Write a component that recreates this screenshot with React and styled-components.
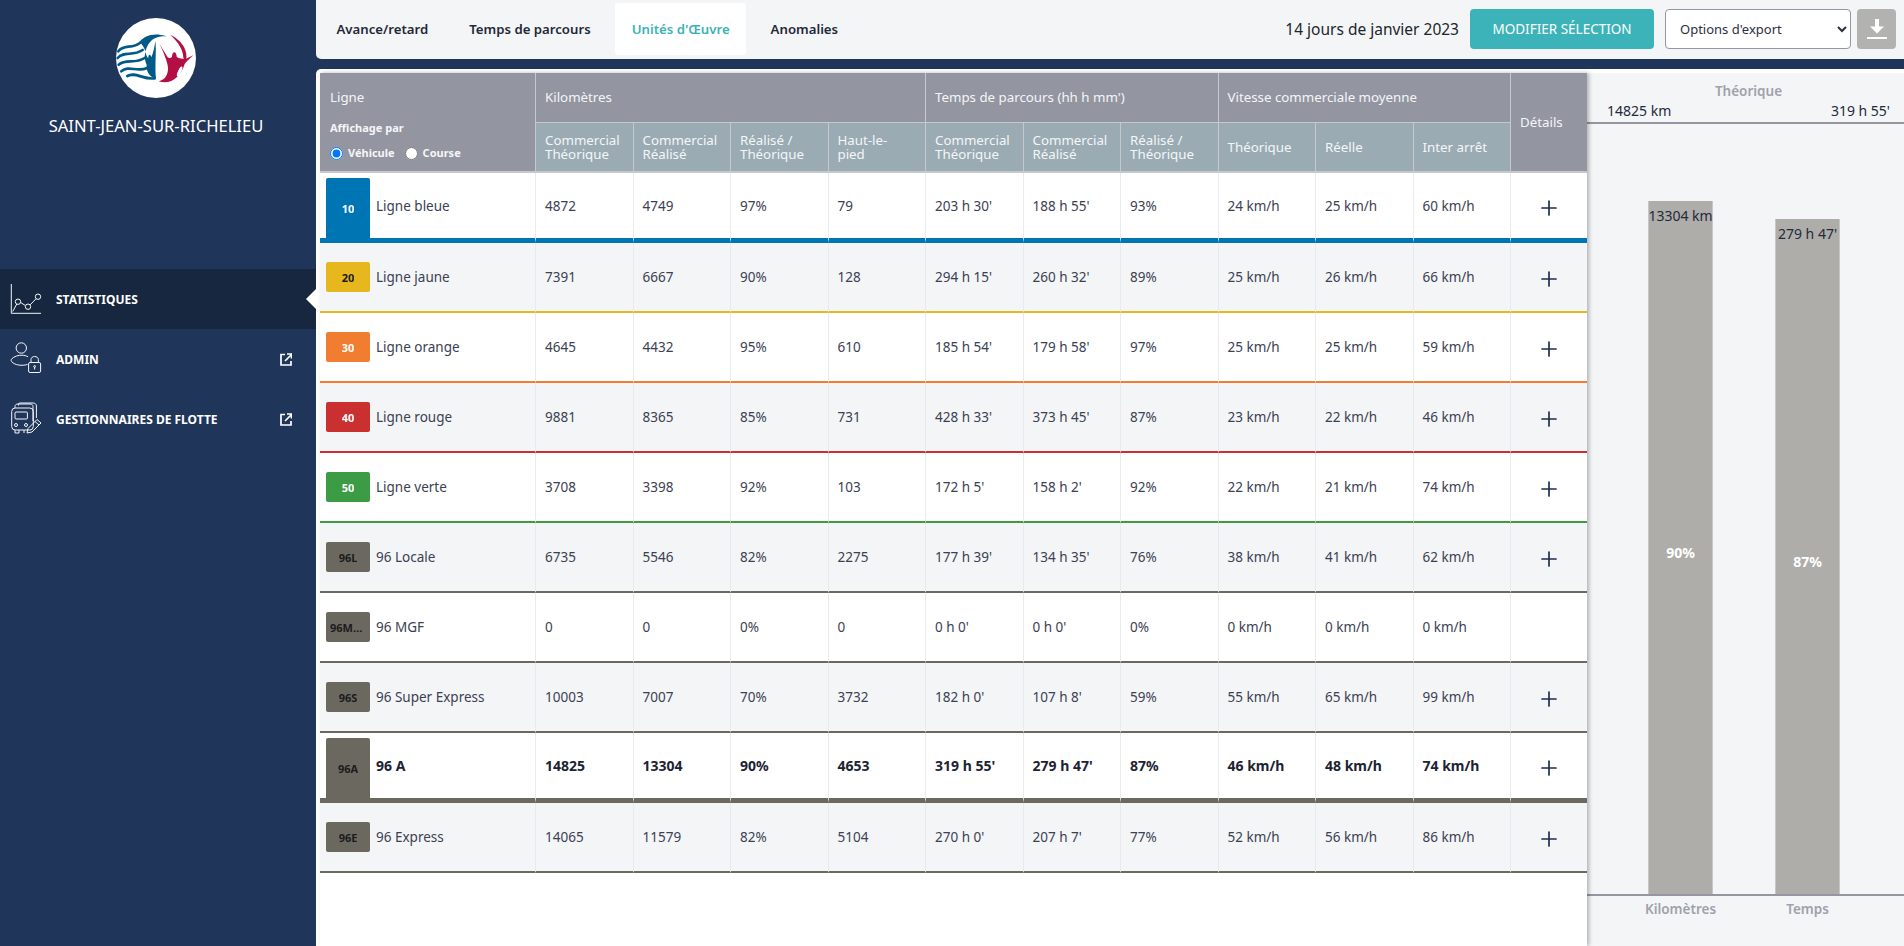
import React from "react";
import styled, { createGlobalStyle } from "styled-components";
import { Plus } from "lucide-react";

const GlobalStyle = createGlobalStyle`
  * { box-sizing: border-box; }
  html, body { margin: 0; height: 100%; }
  body {
    font-family: "Noto Sans", "Open Sans", sans-serif;
    font-size: 14px;
    color: #3b4152;
    background: #20355a;
    overflow: hidden;
  }
`;

const tabs = ["Avance/retard", "Temps de parcours", "Unités d'Œuvre", "Anomalies"];

const lines = [
  { code: "10", name: "Ligne bleue", color: "#0075b4", light: true, big: true, km: ["4872", "4749", "97%", "79"], time: ["203 h 30'", "188 h 55'", "93%"], speed: ["24 km/h", "25 km/h", "60 km/h"], plus: true },
  { code: "20", name: "Ligne jaune", color: "#e6b81e", km: ["7391", "6667", "90%", "128"], time: ["294 h 15'", "260 h 32'", "89%"], speed: ["25 km/h", "26 km/h", "66 km/h"], plus: true },
  { code: "30", name: "Ligne orange", color: "#f07d30", light: true, km: ["4645", "4432", "95%", "610"], time: ["185 h 54'", "179 h 58'", "97%"], speed: ["25 km/h", "25 km/h", "59 km/h"], plus: true },
  { code: "40", name: "Ligne rouge", color: "#c9302f", light: true, km: ["9881", "8365", "85%", "731"], time: ["428 h 33'", "373 h 45'", "87%"], speed: ["23 km/h", "22 km/h", "46 km/h"], plus: true },
  { code: "50", name: "Ligne verte", color: "#3b9c45", light: true, km: ["3708", "3398", "92%", "103"], time: ["172 h 5'", "158 h 2'", "92%"], speed: ["22 km/h", "21 km/h", "74 km/h"], plus: true },
  { code: "96L", name: "96 Locale", color: "#6b6860", km: ["6735", "5546", "82%", "2275"], time: ["177 h 39'", "134 h 35'", "76%"], speed: ["38 km/h", "41 km/h", "62 km/h"], plus: true },
  { code: "96MGF", name: "96 MGF", color: "#6b6860", km: ["0", "0", "0%", "0"], time: ["0 h 0'", "0 h 0'", "0%"], speed: ["0 km/h", "0 km/h", "0 km/h"] },
  { code: "96S", name: "96 Super Express", color: "#6b6860", km: ["10003", "7007", "70%", "3732"], time: ["182 h 0'", "107 h 8'", "59%"], speed: ["55 km/h", "65 km/h", "99 km/h"], plus: true },
  { code: "96A", name: "96 A", color: "#6b6860", big: true, strong: true, km: ["14825", "13304", "90%", "4653"], time: ["319 h 55'", "279 h 47'", "87%"], speed: ["46 km/h", "48 km/h", "74 km/h"], plus: true },
  { code: "96E", name: "96 Express", color: "#6b6860", km: ["14065", "11579", "82%", "5104"], time: ["270 h 0'", "207 h 7'", "77%"], speed: ["52 km/h", "56 km/h", "86 km/h"], plus: true },
];

function Logo() {
  return (
    <LogoSvg viewBox="30 30 240 240">
      <circle cx="150" cy="150" r="120" fill="#fff" />
      <g fill="none" stroke="#005a87" strokeWidth="8" strokeLinecap="round">
        <path d="M37 130 C52 108 78 124 103 104" />
        <path d="M35 150 C54 128 80 146 110 126" />
        <path d="M38 170 C60 150 86 170 116 150" />
        <path d="M46 190 C68 170 92 194 124 180" />
        <path d="M64 204 C88 190 112 216 146 211" />
      </g>
      <path fill="#005a87" d="M100 102 C115 82 145 72 182 85 C150 82 128 95 118 130 C115 118 108 108 100 102 Z" />
      <path fill="#005a87" d="M148 98 C152 130 146 170 150 213 C130 205 120 190 122 170 C118 160 114 150 118 132 C122 145 124 148 127 150 C126 138 134 136 136 148 C142 135 146 115 148 98 Z" />
      <path fill="#b40f45" d="M192 80 C225 95 248 125 240 160 L232 150 C232 125 215 100 192 80 Z" />
      <path fill="#b40f45" d="M160 107 L185 148 C190 152 196 150 198 146 C198 128 212 128 212 146 C218 152 228 152 240 152 L262 142 C252 152 244 158 236 168 C225 205 195 232 158 220 C178 215 186 200 186 180 C186 165 172 130 160 107 Z" />
      <ellipse cx="221" cy="190" rx="5" ry="16" transform="rotate(25 221 190)" fill="#fff" />
    </LogoSvg>
  );
}

function ChartIcon() {
  return (
    <NavSvg viewBox="0 0 32 34">
      <path d="M1.3 2 V31.3 H31" />
      <path d="M2.7 29.5 L6.8 22 M10.6 20.5 L15.2 23.4 M20.2 22.8 L26 16.8" />
      <circle cx="8" cy="19.7" r="2.7" />
      <circle cx="18" cy="24.7" r="2.7" />
      <circle cx="28" cy="14.7" r="2.7" />
    </NavSvg>
  );
}

function AdminIcon() {
  return (
    <NavSvg viewBox="0 0 32 34">
      <circle cx="11.3" cy="6" r="5.2" />
      <path d="M17.5 22.5 C12 24 5 23.5 1.5 19.5 C1 18.6 1 17.8 1.6 17 C4 14.3 9 13 12 13.2 C14.5 13.3 16.5 13.9 18 14.8" />
      <rect x="18.6" y="20.5" width="12" height="10" rx="1.5" />
      <path d="M21 20.5 V17.5 C21 13.5 28.3 13.5 28.3 17.5 V20.5" />
      <circle cx="24.6" cy="24.5" r="0.9" />
      <path d="M24.6 25 V27.5" />
    </NavSvg>
  );
}

function FleetIcon() {
  return (
    <NavSvg viewBox="0 0 32 34">
      <path d="M5 6 V4.5 C5 3 6 2 8 2 H20 C22 2 23 3 23 4.5 V19" />
      <path d="M8.5 3.5 V2 C8.5 1.2 9.5 1 11 1 H23 C25 1 26.4 2 26.4 4 V16" />
      <rect x="1.7" y="6" width="21.6" height="22" rx="3.5" />
      <rect x="5" y="10" width="12.4" height="7" rx="1" />
      <circle cx="6" cy="23" r="1.5" />
      <circle cx="16" cy="23" r="1.5" />
      <path d="M5 28 V31 H9 V28 M14 28 V31" />
      <path d="M17 31 L18 26.5 L27 17.5 L31 21 L22 30 Z M25 19.5 L29 23" />
    </NavSvg>
  );
}

function ExternalIcon() {
  return (
    <ExternalSvg viewBox="0 0 12 13">
      <path d="M5 1.5 H1 V12 H11 V8" />
      <path d="M5 8 L11 2 M7 1 H11.5 V5.5" />
    </ExternalSvg>
  );
}

function DownloadIcon() {
  return (
    <svg width="20" height="20" viewBox="0 0 20 20" fill="#fff">
      <path d="M8 0 H12 V7.5 H17 L10 14.5 L3 7.5 H8 Z" />
      <rect x="0" y="18" width="20" height="2" />
    </svg>
  );
}

function LineRow({ line, even }) {
  return (
    <Row $even={even} $strong={line.strong}>
      <BodyCell $color={line.color} $big={line.big} $first>
        <LineInfo $big={line.big}>
          <Badge $color={line.color} $light={line.light} $big={line.big}>
            <span>{line.code}</span>
          </Badge>
          <span>{line.name}</span>
        </LineInfo>
      </BodyCell>
      {[...line.km, ...line.time, ...line.speed].map((value, i) => (
        <BodyCell key={i} $color={line.color} $big={line.big}>
          {value}
        </BodyCell>
      ))}
      <BodyCell $color={line.color} $big={line.big} $center>
        {line.plus && (
          <PlusIcon>
            <Plus size={24} strokeWidth={1.7} />
          </PlusIcon>
        )}
      </BodyCell>
    </Row>
  );
}

function App() {
  return (
    <>
      <GlobalStyle />
      <Page>
        <Sidebar>
          <Brand>
            <Logo />
            <City>SAINT-JEAN-SUR-RICHELIEU</City>
          </Brand>
          <Nav>
            <NavItem $active>
              <ChartIcon />
              <NavLabel>STATISTIQUES</NavLabel>
            </NavItem>
            <NavItem>
              <AdminIcon />
              <NavLabel>ADMIN</NavLabel>
              <ExternalIcon />
            </NavItem>
            <NavItem>
              <FleetIcon />
              <NavLabel>GESTIONNAIRES DE FLOTTE</NavLabel>
              <ExternalIcon />
            </NavItem>
          </Nav>
        </Sidebar>

        <Content>
          <TopBar>
            <TabList>
              {tabs.map((tab) => (
                <Tab key={tab} $active={tab === "Unités d'Œuvre"}>
                  {tab}
                </Tab>
              ))}
            </TabList>
            <Tools>
              <Period>14 jours de janvier 2023</Period>
              <EditButton>MODIFIER SÉLECTION</EditButton>
              <ExportSelect defaultValue="options">
                <option value="options">Options d'export</option>
              </ExportSelect>
              <DownloadButton>
                <DownloadIcon />
              </DownloadButton>
            </Tools>
          </TopBar>

          <Main>
            <TableWrap>
              <Table>
                <colgroup>
                  <col style={{ width: 215 }} />
                  {Array.from({ length: 10 }, (_, i) => (
                    <col key={i} style={{ width: 97.5 }} />
                  ))}
                  <col style={{ width: 77 }} />
                </colgroup>
                <thead>
                  <tr>
                    <GroupHead rowSpan={2} $top>
                      Ligne
                      <DisplayTitle>Affichage par</DisplayTitle>
                      <RadioRow>
                        <RadioLabel>
                          <input type="radio" name="display" defaultChecked />
                          Véhicule
                        </RadioLabel>
                        <RadioLabel>
                          <input type="radio" name="display" />
                          Course
                        </RadioLabel>
                      </RadioRow>
                    </GroupHead>
                    <GroupHead colSpan={4}>Kilomètres</GroupHead>
                    <GroupHead colSpan={3}>Temps de parcours (hh h mm')</GroupHead>
                    <GroupHead colSpan={3}>Vitesse commerciale moyenne</GroupHead>
                    <GroupHead rowSpan={2} $tall>
                      Détails
                    </GroupHead>
                  </tr>
                  <tr>
                    <SubHead>Commercial<br />Théorique</SubHead>
                    <SubHead>Commercial<br />Réalisé</SubHead>
                    <SubHead>Réalisé /<br />Théorique</SubHead>
                    <SubHead>Haut-le-<br />pied</SubHead>
                    <SubHead>Commercial<br />Théorique</SubHead>
                    <SubHead>Commercial<br />Réalisé</SubHead>
                    <SubHead>Réalisé /<br />Théorique</SubHead>
                    <SubHead>Théorique</SubHead>
                    <SubHead>Réelle</SubHead>
                    <SubHead>Inter arrêt</SubHead>
                  </tr>
                </thead>
                <tbody>
                  {lines.map((line, i) => (
                    <LineRow key={line.code} line={line} even={i % 2 === 1} />
                  ))}
                </tbody>
              </Table>
            </TableWrap>

            <ChartPanel>
              <ChartHead>
                <ChartTitle>Théorique</ChartTitle>
                <ChartTotals>
                  <span>14825 km</span>
                  <span>319 h 55'</span>
                </ChartTotals>
              </ChartHead>
              <Plot>
                <Bar $ratio={0.9}>
                  <BarValue>13304 km</BarValue>
                  <BarPercent>90%</BarPercent>
                </Bar>
                <Bar $ratio={0.876}>
                  <BarValue>279 h 47'</BarValue>
                  <BarPercent>87%</BarPercent>
                </Bar>
              </Plot>
              <Axis>
                <AxisLabel>Kilomètres</AxisLabel>
                <AxisLabel>Temps</AxisLabel>
              </Axis>
            </ChartPanel>
          </Main>
        </Content>
      </Page>
    </>
  );
}

export default App;

const Page = styled.div`
  display: flex;
  width: 1904px;
  height: 946px;
  background: #20355a;
`;

const Sidebar = styled.aside`
  width: 316px;
  flex: none;
  color: #fff;
`;

const Brand = styled.div`
  height: 269px;
  padding: 18px 4px 0 0;
  display: flex;
  flex-direction: column;
  align-items: center;
`;

const LogoSvg = styled.svg`
  width: 80px;
  height: 80px;
`;

const City = styled.div`
  margin-top: 18px;
  font-size: 16.6px;
  line-height: 20px;
  white-space: nowrap;
`;

const Nav = styled.nav`
  display: flex;
  flex-direction: column;
`;

const NavItem = styled.div`
  position: relative;
  display: flex;
  align-items: center;
  height: 60px;
  padding: 0 24px 0 10px;
  background: ${(p) => (p.$active ? "#16273f" : "transparent")};

  &::after {
    content: "";
    display: ${(p) => (p.$active ? "block" : "none")};
    position: absolute;
    right: 0;
    top: 50%;
    margin-top: -10px;
    border-style: solid;
    border-width: 10px 10px 10px 0;
    border-color: transparent #fff transparent transparent;
  }
`;

const NavSvg = styled.svg`
  width: 32px;
  height: 34px;
  flex: none;
  fill: none;
  stroke: #f4f6f8;
  stroke-width: 1;
`;

const NavLabel = styled.span`
  margin-left: 14px;
  flex: 1;
  font-size: 12px;
  font-weight: 700;
  white-space: nowrap;
`;

const ExternalSvg = styled.svg`
  width: 12px;
  height: 13px;
  flex: none;
  fill: none;
  stroke: #fff;
  stroke-width: 1.7;
`;

const Content = styled.div`
  flex: 1;
  min-width: 0;
  display: flex;
  flex-direction: column;
`;

const TopBar = styled.header`
  height: 59px;
  flex: none;
  display: flex;
  align-items: center;
  justify-content: space-between;
  padding: 0 8px 0 4px;
  background: #f4f5f7;
  border-radius: 0 0 0 5px;
`;

const TabList = styled.div`
  display: flex;
  gap: 8px;
  height: 52px;
  margin-bottom: 1px;
`;

const Tab = styled.div`
  display: flex;
  align-items: center;
  padding: 0 16.5px;
  border-radius: 3px;
  font-weight: 600;
  font-size: 13.2px;
  color: ${(p) => (p.$active ? "#3cb3b8" : "#1f2937")};
  background: ${(p) => (p.$active ? "#fff" : "transparent")};
`;

const Tools = styled.div`
  display: flex;
  align-items: center;
  margin-bottom: 1px;
`;

const Period = styled.span`
  font-size: 15.5px;
  color: #212529;
  margin-right: 11px;
`;

const EditButton = styled.button`
  width: 184px;
  height: 40px;
  border: 0;
  border-radius: 4px;
  background: #3cb3b8;
  color: #fff;
  font-family: inherit;
  font-size: 13.5px;
  font-weight: 400;
`;

const ExportSelect = styled.select`
  width: 186px;
  height: 40px;
  margin-left: 11px;
  padding-left: 10px;
  border: 1px solid #9596a1;
  border-radius: 4px;
  background: #fff;
  color: #2b3040;
  font-family: inherit;
  font-size: 13px;
`;

const DownloadButton = styled.button`
  width: 39px;
  height: 40px;
  margin-left: 6px;
  border: 0;
  border-radius: 4px;
  background: #b2b3b1;
  display: flex;
  align-items: center;
  justify-content: center;
`;

const Main = styled.main`
  flex: 1;
  min-height: 0;
  margin-top: 10px;
  padding: 4px 0 0 4px;
  display: flex;
  background: #fff;
  border-radius: 5px 0 0 0;
`;

const TableWrap = styled.div`
  width: 1267px;
  flex: none;
  position: relative;
  z-index: 1;
  background: #fff;
  box-shadow: 2px 0 4px rgba(0, 0, 0, 0.28);
`;

const Table = styled.table`
  width: 1267px;
  table-layout: fixed;
  border-collapse: separate;
  border-spacing: 0;
`;

const GroupHead = styled.th`
  height: 50px;
  padding: ${(p) => (p.$top ? "16px 0 0 10px" : "0 0 0 9px")};
  background: #9395a0;
  color: #f5f6f8;
  font-size: 13.3px;
  font-weight: 400;
  line-height: 17px;
  text-align: left;
  vertical-align: ${(p) => (p.$top ? "top" : "middle")};
  border-left: ${(p) => (p.$top ? "0" : "1px solid #c6c8cf")};
  border-bottom: ${(p) => (p.$top || p.$tall ? "2px solid #c6c8cf" : "1px solid #c6c8cf")};
`;

const SubHead = styled.th`
  height: 50px;
  padding: 0 0 0 9px;
  background: #9aabb3;
  color: #f5f6f8;
  font-size: 13.3px;
  font-weight: 400;
  line-height: 14px;
  text-align: left;
  border-left: 1px solid #c6c8cf;
  border-bottom: 2px solid #c6c8cf;
`;

const DisplayTitle = styled.div`
  margin-top: 14px;
  font-size: 11px;
  font-weight: 700;
  line-height: 15px;
`;

const RadioRow = styled.div`
  display: flex;
  gap: 10px;
  margin-top: 10px;
`;

const RadioLabel = styled.label`
  display: flex;
  align-items: center;
  gap: 5px;
  font-size: 11px;
  font-weight: 700;
  line-height: 16px;

  input {
    width: 13px;
    height: 13px;
    margin: 0;
  }
`;

const Row = styled.tr`
  background: ${(p) => (p.$even ? "#f4f5f7" : "#fff")};
  font-size: ${(p) => (p.$strong ? "14px" : "13.5px")};
  font-weight: ${(p) => (p.$strong ? 700 : 400)};
  color: ${(p) => (p.$strong ? "#1c2333" : "#3b4152")};
`;

const BodyCell = styled.td`
  height: 70px;
  padding: ${(p) => (p.$first ? "0 0 0 6px" : p.$center ? "0" : "0 0 0 9px")};
  text-align: ${(p) => (p.$center ? "center" : "left")};
  white-space: nowrap;
  border-left: ${(p) => (p.$first ? "0" : "1px solid #e8eaed")};
  border-bottom: ${(p) => (p.$big ? "5px" : "2px")} solid ${(p) => p.$color};
`;

const LineInfo = styled.div`
  display: flex;
  align-items: center;
  gap: 6px;
  height: ${(p) => (p.$big ? "65px" : "68px")};
`;

const Badge = styled.div`
  width: 44px;
  flex: none;
  height: ${(p) => (p.$big ? "60px" : "30px")};
  align-self: ${(p) => (p.$big ? "flex-end" : "center")};
  display: flex;
  align-items: center;
  justify-content: center;
  padding: 0 4px;
  border-radius: ${(p) => (p.$big ? "2px 2px 0 0" : "2px")};
  background: ${(p) => p.$color};
  color: ${(p) => (p.$light ? "#fff" : "#1c1c1c")};
  font-size: 11px;
  font-weight: 700;

  span {
    overflow: hidden;
    text-overflow: ellipsis;
    white-space: nowrap;
  }
`;

const PlusIcon = styled.span`
  display: inline-flex;
  margin-top: 8px;
  color: #1f2d50;
`;

const ChartPanel = styled.section`
  flex: 1;
  min-width: 0;
  display: flex;
  flex-direction: column;
  background: #f4f5f7;
`;

const ChartHead = styled.div`
  height: 51px;
  flex: none;
  padding: 10px 14px 0 20px;
  border-bottom: 2px solid #9596a1;
`;

const ChartTitle = styled.div`
  text-align: center;
  font-size: 13.5px;
  font-weight: 600;
  line-height: 17px;
  color: #9fa1ab;
`;

const ChartTotals = styled.div`
  display: flex;
  justify-content: space-between;
  font-size: 14px;
  line-height: 18px;
  margin-top: 2px;
  color: #232a3b;
`;

const Plot = styled.div`
  height: 772px;
  flex: none;
  padding-right: 3px;
  display: flex;
  justify-content: center;
  align-items: flex-end;
  gap: 62px;
  border-bottom: 2px solid #9596a1;
`;

const Bar = styled.div`
  width: 65px;
  height: ${(p) => p.$ratio * 770}px;
  padding: 8px 0 12px;
  display: flex;
  flex-direction: column;
  background: #aeadaa;
  border-left: 1px solid #c6c6c4;
  border-right: 1px solid #c6c6c4;
`;

const BarValue = styled.div`
  margin: 0 -1px;
  text-align: center;
  white-space: nowrap;
  font-size: 14px;
  line-height: 14px;
  color: #232a3b;
`;

const BarPercent = styled.div`
  flex: 1;
  display: flex;
  align-items: center;
  justify-content: center;
  color: #fff;
  font-size: 14px;
  font-weight: 700;
`;

const Axis = styled.div`
  display: flex;
  justify-content: center;
  gap: 62px;
  padding: 4px 3px 0 0;
`;

const AxisLabel = styled.div`
  width: 65px;
  display: flex;
  justify-content: center;
  white-space: nowrap;
  font-size: 13.5px;
  font-weight: 600;
  line-height: 18px;
  color: #9fa1ab;
`;
